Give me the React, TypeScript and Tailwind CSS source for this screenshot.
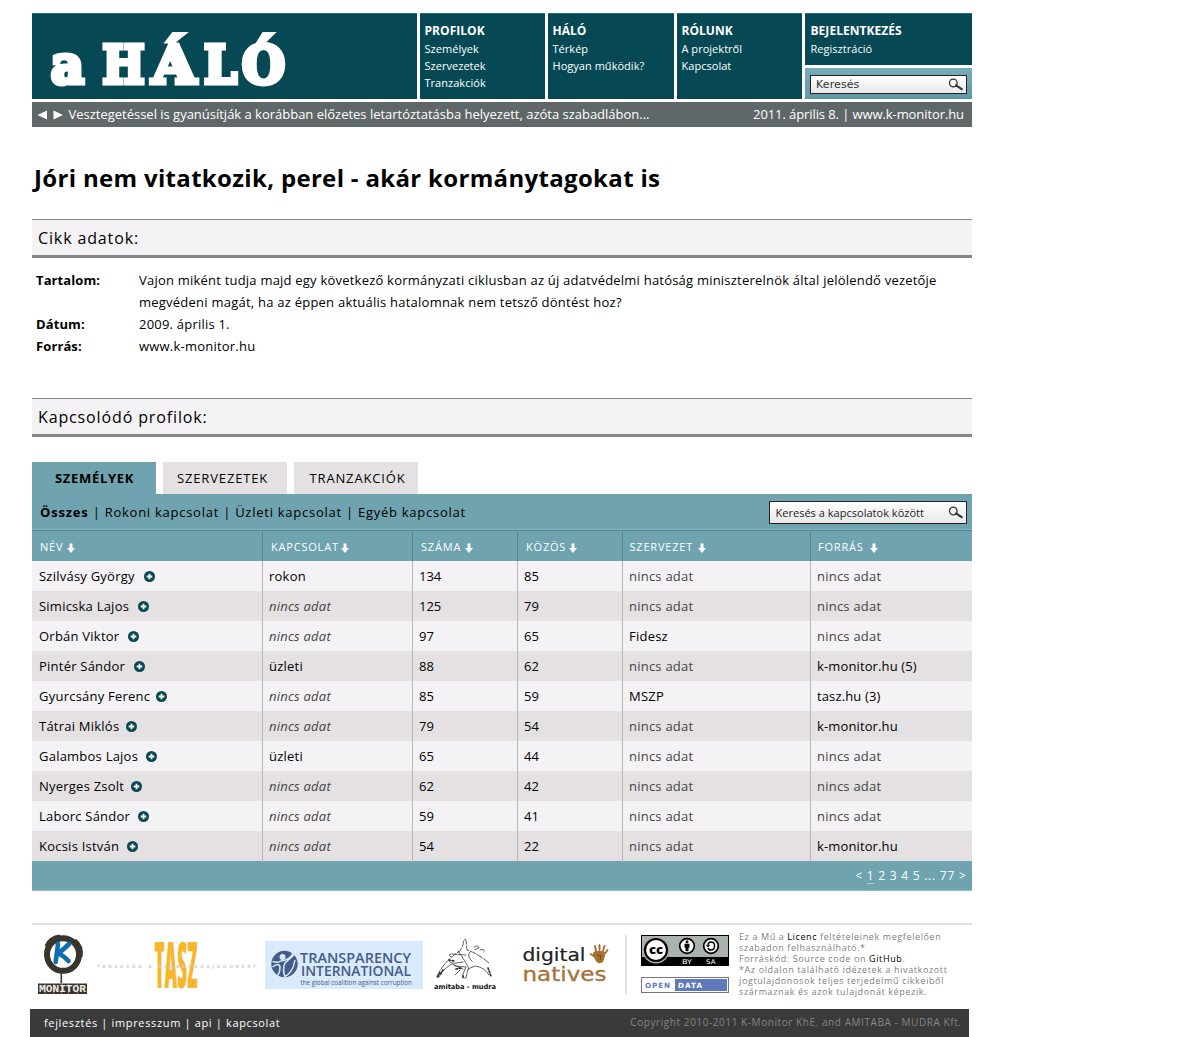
import type { ReactNode } from "react";

const menus = [
  { title: "PROFILOK", links: ["Személyek", "Szervezetek", "Tranzakciók"], cls: "w-[125px]" },
  { title: "HÁLÓ", links: ["Térkép", "Hogyan működik?"], cls: "w-[126px]" },
  { title: "RÓLUNK", links: ["A projektről", "Kapcsolat"], cls: "w-[125px]" },
];

type Row = [string, number, string, string, string, string, string];
const none = "nincs adat";
const rows: Row[] = [
  ["Szilvásy György", 105, "rokon", "134", "85", none, none],
  ["Simicska Lajos", 99, none, "125", "79", none, none],
  ["Orbán Viktor", 89, none, "97", "65", "Fidesz", none],
  ["Pintér Sándor", 95, "üzleti", "88", "62", none, "k-monitor.hu (5)"],
  ["Gyurcsány Ferenc", 117, none, "85", "59", "MSZP", "tasz.hu (3)"],
  ["Tátrai Miklós", 87, none, "79", "54", none, "k-monitor.hu"],
  ["Galambos Lajos", 107, "üzleti", "65", "44", none, none],
  ["Nyerges Zsolt", 92, none, "62", "42", none, none],
  ["Laborc Sándor", 99, none, "59", "41", none, none],
  ["Kocsis István", 88, none, "54", "22", none, "k-monitor.hu"],
];

const gridCols = "grid grid-cols-[230px_150px_105px_105px_188px_162px]";

function Magnifier() {
  return (
    <svg width="16" height="14" viewBox="0 0 16 14" className="shrink-0">
      <circle cx="5.3" cy="5" r="3.8" fill="none" stroke="#333" strokeWidth="1.3" />
      <path d="M8 7.400l5.800 3.800" stroke="#333" strokeWidth="2.1" strokeLinecap="round" />
    </svg>
  );
}

function DownArrow() {
  return (
    <svg width="8" height="10" viewBox="0 0 8 10" className="shrink-0">
      <path d="M2.500 0.500h3v4.600H8L4 9.900 0 5.100h2.500z" fill="#fff" />
    </svg>
  );
}

function Plus() {
  return (
    <svg width="11" height="11" viewBox="0 0 11 11" className="shrink-0">
      <circle cx="5.5" cy="5.5" r="5.5" fill="#064954" />
      <path d="M5.5 2.7v5.6M2.7 5.5h5.6" stroke="#fff" strokeWidth="1.8" />
    </svg>
  );
}

function MenuTitle({ children }: { children: ReactNode }) {
  return <div className="text-xs leading-[17px] font-bold tracking-[0.04px]">{children}</div>;
}

function SiteLogo() {
  const glyph = { lengthAdjust: "spacingAndGlyphs" as const };
  return (
    <svg
      width="385"
      height="85"
      viewBox="32 14 385 85"
      className="block font-bold"
      fill="#fff"
      stroke="#fff"
      strokeWidth="5"
      fontFamily="DejaVu Serif, serif"
      fontSize="53"
    >
      <text x="51" y="82.5" textLength="33" {...glyph}>a</text>
      <text x="102.500" y="82.5" textLength="42" {...glyph}>H</text>
      <text x="152" y="82.5" textLength="44" {...glyph}>Á</text>
      <text x="204" y="82.5" textLength="33" {...glyph}>L</text>
      <text x="242" y="82.5" textLength="43" {...glyph}>Ó</text>
    </svg>
  );
}

function SectionTitle({ children }: { children: ReactNode }) {
  return (
    <h2 className="h-[39px] border-t border-b-[3px] border-[#888889] bg-[#f4f2f4] pl-1.5 text-base leading-[36px] tracking-[0.87px]">
      {children}
    </h2>
  );
}

function HeadCell({ children, cls, first }: { children: ReactNode; cls: string; first?: boolean }) {
  return (
    <div className={`flex items-center pt-0.5 ${first ? "" : "border-l border-[#59828c]"} ${cls}`}>
      <span>{children}</span>
      <DownArrow />
    </div>
  );
}

function Cell({ text, italic }: { text: string; italic?: boolean }) {
  const empty = text === none;
  return (
    <div
      className={`border-l border-[#b7b5b7] pl-1.5 ${empty ? "text-[#444]" : ""} ${empty && italic ? "italic" : ""} ${/^\d/.test(text) ? "tracking-normal" : ""} ${text.includes(".hu") ? "tracking-[0.13px]" : ""}`}
    >
      {text}
    </div>
  );
}

function FooterLogos() {
  return (
    <svg width="593" height="72" viewBox="32 929 593 72" className="block shrink-0">
      <g>
        <ellipse cx="63" cy="954.5" rx="16" ry="16.3" fill="none" stroke="#3a352c" strokeWidth="6" />
        <path d="M46 946Q50 937 60 936M75 940Q83 946 81 957" fill="none" stroke="#3a352c" strokeWidth="3" />
        <path d="M61.3 972v11" stroke="#3a352c" strokeWidth="1.6" />
        <path d="M58 944L55.7 962M69 944Q63 950 58.5 953Q65 957 68.5 961" fill="none" stroke="#0e6cb0" strokeWidth="4.600" strokeLinecap="round" />
        <rect x="38" y="983.5" width="49" height="10.5" fill="#3a332c" />
        <path d="M45.3 983v11M53.6 983v11M61.5 983v11M68.5 983v11M77.5 983v11" stroke="#9c958c" strokeWidth="0.7" />
        <text x="39" y="992.3" textLength="47" lengthAdjust="spacingAndGlyphs" fontFamily="Liberation Mono, monospace" fontWeight="700" fontSize="11" fill="#efece6">MONITOR</text>
      </g>
      <g>
        <text x="154.5" y="987.5" textLength="43" lengthAdjust="spacingAndGlyphs" fontFamily="Open Sans, sans-serif" fontWeight="800" fontSize="63.5" fill="#f8b62d" style={{ fontStretch: "75%" }}>TASZ</text>
        <text x="97" y="968" textLength="159" fontFamily="DejaVu Sans, sans-serif" fontWeight="700" fontSize="4.400" fill="#cfcfcf">TÁRSASÁG A SZABADSÁGJOGOKÉRT</text>
      </g>
      <g>
        <rect x="265" y="941" width="158" height="48" fill="#d9eafa" />
        <circle cx="284.5" cy="964" r="13.200" fill="#455b88" />
        <path d="M272.500 961.500Q278 963 281 961Q290 960 293 953M272.500 967Q279 962 280 967Q280 973 277 976M285 977Q282 969 285 963L294 955M284 977Q293 973 295 960" fill="none" stroke="#d9eafa" strokeWidth="1.5" />
        <circle cx="282.5" cy="957" r="3" fill="#d9eafa" />
        <text x="300" y="963" textLength="111" lengthAdjust="spacingAndGlyphs" fontFamily="Open Sans, sans-serif" fontWeight="600" fontSize="14" fill="#455b88">TRANSPARENCY</text>
        <text x="301" y="976" textLength="110" lengthAdjust="spacingAndGlyphs" fontFamily="Open Sans, sans-serif" fontWeight="600" fontSize="14" fill="#455b88">INTERNATIONAL</text>
        <text x="300.500" y="984.5" textLength="111.500" lengthAdjust="spacingAndGlyphs" fontFamily="Open Sans, sans-serif" fontSize="7" fill="#455b88">the global coalition against corruption</text>
      </g>
      <g fill="none" stroke="#333" strokeLinecap="round">
        <path d="M437 976Q445 960 460 951L463 945Q464 937 466 940L467 950Q477 953 489 963" strokeWidth="0.8" strokeDasharray="6 1.800" />
        <path d="M439 977Q444 968 452 964L463 969M451 957Q447 954 452 954L466 955M449 960Q448 965 463 962M455 966L466 967 463 974Q463 979 466 978L468 969 475 966Q484 967 489 975M458 951Q466 962 469 969M470 952Q466 956 473 962M474 947q4-3 5 1l-5 2M480 950q5-2 4 2M455 975l5-5" strokeWidth="0.8" strokeDasharray="5 1" />
        <path d="M437.500 977l3-5M440.500 974l3-5M488 968l3 8M449 960l6 1M456 969l5-1M463 976v3" strokeWidth="1.700" strokeDasharray="1.500 1.800" />
        <text x="434" y="988.5" textLength="62" lengthAdjust="spacingAndGlyphs" stroke="none" fill="#111" fontFamily="DejaVu Sans, sans-serif" fontWeight="700" fontSize="6.8">amitaba - mudra</text>
      </g>
      <g fontFamily="DejaVu Sans, sans-serif">
        <text x="522.5" y="961" textLength="63" lengthAdjust="spacingAndGlyphs" fontSize="18" fill="#222" stroke="#222" strokeWidth="0.2">digital</text>
        <text x="522.500" y="981" textLength="84" lengthAdjust="spacingAndGlyphs" fontSize="19" fill="#a8713a" stroke="#a8713a" strokeWidth="0.3">natives</text>
        <path d="M594 957q-3-5 2-6l6 0q4 0 3 5l-2 6q-5 3-7-1z" fill="#a9712f" />
        <path d="M595 957L590.500 954M596 951l-1-5M599.500 950v-5M603 951l1.500-5M605.500 953l2-3" stroke="#a9712f" strokeWidth="1.9" strokeLinecap="round" />
        <path d="M597 955l4 1-1 4" stroke="#6d4317" fill="none" />
      </g>
    </svg>
  );
}

function Badges() {
  return (
    <svg width="88" height="60" viewBox="641 935 88 60" className="block shrink-0">
      <rect x="641.5" y="935.5" width="87" height="30" fill="#aab2ab" stroke="#000" />
      <rect x="641" y="957" width="88" height="9" fill="#000" />
      <circle cx="656" cy="950" r="13.5" fill="#aab2ab" />
      <circle cx="656" cy="950" r="11" fill="#fff" stroke="#000" strokeWidth="2.2" />
      <text x="649" y="954" textLength="14" lengthAdjust="spacingAndGlyphs" fontFamily="Open Sans, sans-serif" fontWeight="800" fontSize="13">cc</text>
      <circle cx="687" cy="946" r="7.300" fill="#fff" stroke="#000" strokeWidth="1.7" />
      <circle cx="687" cy="941.8" r="1.5" />
      <path d="M684.500 943.800h5v4h-1v3.500h-3v-3.500h-1z" />
      <circle cx="711" cy="946" r="7.300" fill="#fff" stroke="#000" strokeWidth="1.7" />
      <path d="M708 944.500Q708.500 942 711 942q3.600 0 3.600 4t-3.600 4q-2.500 0-3-2" fill="none" stroke="#000" strokeWidth="1.5" />
      <path d="M705.800 944.800h4.400l-2.200 2.600z" />
      <g fontFamily="DejaVu Sans, sans-serif" fontSize="6.5">
        <text x="682" y="964" textLength="10" lengthAdjust="spacingAndGlyphs" fill="#fff">BY</text>
        <text x="706" y="964" textLength="9.500" lengthAdjust="spacingAndGlyphs" fill="#fff">SA</text>
        <rect x="641.5" y="977.5" width="87" height="15" fill="#fff" stroke="#777" />
        <rect x="675" y="979" width="52" height="12" fill="#6079bd" />
        <g fontSize="7.2" fontWeight="700">
          <text x="645" y="988" textLength="25" fill="#6079bd">OPEN</text>
          <text x="678" y="988" textLength="24" fill="#fff">DATA</text>
        </g>
      </g>
    </svg>
  );
}

export default function App() {
  return (
    <div className="h-[1037px] w-[1200px] overflow-hidden bg-white pt-[13px] pl-[30px] font-['Open_Sans',sans-serif] text-[13px] text-black">
      <div className="ml-0.5 w-[940px]">
        <header className="flex h-[86px] gap-[3px] text-white">
          <div className="w-[385px] border-t border-[#16737d] bg-[#064954]">
            <SiteLogo />
          </div>
          {menus.map((m) => (
            <nav key={m.title} className={`border-t border-[#16737d] bg-[#064954] pt-2 pl-[4.500px] ${m.cls}`}>
              <MenuTitle>{m.title}</MenuTitle>
              {m.links.map((l) => (
                <div key={l} className="h-[17px] text-[11px] leading-[19px] tracking-[0.03px]">{l}</div>
              ))}
            </nav>
          ))}
          <div className="flex flex-1 flex-col gap-[3px]">
            <div className="h-[52px] border-t border-[#16737d] bg-[#064954] pt-2 pl-[5.500px]">
              <MenuTitle>BEJELENTKEZÉS</MenuTitle>
              <div className="text-[11px] leading-[19px] tracking-[0.03px]">Regisztráció</div>
            </div>
            <div className="h-[31px] bg-linear-to-b from-[#79acb8] to-[#5f98a5] px-[5px] pt-[7px]">
              <div className="flex h-[19px] items-center justify-between border border-[#222] bg-linear-to-b from-white to-[#e8e8e8] pr-0.5 pl-[5px] font-['DejaVu_Sans',sans-serif] text-[11px] tracking-[0.1px] text-[#333]">
                <span className="pt-0.5">Keresés</span>
                <Magnifier />
              </div>
            </div>
          </div>
        </header>

        <div className="mt-[3px] flex h-[25px] items-center justify-between bg-[#5f6769] pr-[8px] pl-[5px] leading-[25px] text-white">
          <div className="flex items-center">
            <svg width="26" height="10" viewBox="0 0 26 10" fill="#fff">
              <path d="M.5 5l9.500-4.500v9zM26 5l-9.500-4.500v9z" />
            </svg>
            <span className="ml-[5.500px] tracking-[-0.01px] whitespace-nowrap">
              Vesztegetéssel is gyanúsítják a korábban előzetes letartóztatásba helyezett, azóta szabadlábon...
            </span>
          </div>
          <span className="tracking-[-0.09px]">2011. április 8. | www.k-monitor.hu</span>
        </div>

        <h1 className="mt-[33px] pl-0.5 text-2xl leading-[36px] font-bold tracking-[0.325px] whitespace-nowrap">
          Jóri nem vitatkozik, perel - akár kormánytagokat is
        </h1>

        <div className="mt-[23px]">
          <SectionTitle>Cikk adatok:</SectionTitle>
        </div>
        <dl className="mt-[11px] grid grid-cols-[103px_1fr] pl-1 leading-[22px] tracking-[0.215px]">
          <dt className="font-bold tracking-[0.1px]">Tartalom:</dt>
          <dd className="whitespace-nowrap">
            Vajon miként tudja majd egy következő kormányzati ciklusban az új adatvédelmi hatóság miniszterelnök által jelölendő vezetője
            <br />
            <span className="tracking-[0.235px]">megvédeni magát, ha az éppen aktuális hatalomnak nem tetsző döntést hoz?</span>
          </dd>
          <dt className="font-bold tracking-[0.1px]">Dátum:</dt>
          <dd>2009. április 1.</dd>
          <dt className="font-bold tracking-[0.1px]">Forrás:</dt>
          <dd>www.k-monitor.hu</dd>
        </dl>

        <div className="mt-[41px]">
          <SectionTitle>Kapcsolódó profilok:</SectionTitle>
        </div>

        <div className="mt-[25px] flex h-8 gap-[7px] leading-[33px] tracking-[0.85px]">
          <div className="w-[124px] bg-[#6ea3af] pl-[23px] font-bold tracking-[0.7px]">SZEMÉLYEK</div>
          <div className="w-[124px] bg-[#e5e1e3] pl-3.5">SZERVEZETEK</div>
          <div className="w-[124px] bg-[#e5e1e3] pl-[15.500px]">TRANZAKCIÓK</div>
        </div>
        <div className="flex h-[37px] justify-between border-b border-[#4f8492] bg-[#6ea3af] pr-[5px] pl-2 shadow-[inset_0_-1px_0_#87b7c1]">
          <div className="leading-[37px] tracking-[0.74px] whitespace-nowrap">
            <b className="tracking-[0.8px]">Összes</b> | Rokoni kapcsolat | Üzleti kapcsolat | Egyéb kapcsolat
          </div>
          <div className="mt-[7px] flex h-[23px] w-[198px] items-center justify-between border border-[#222] bg-linear-to-b from-white to-[#e8e8e8] pr-0.5 pl-[5.500px] text-[11px] tracking-[0.02px] text-[#222]">
            <span className="pt-px">Keresés a kapcsolatok között</span>
            <Magnifier />
          </div>
        </div>

        <div className={`${gridCols} h-[30px] bg-[#6ea3af] pt-px text-[11px] tracking-[0.8px] text-white`}>
          <HeadCell first cls="gap-[3.500px] pl-2">NÉV</HeadCell>
          <HeadCell cls="gap-[2.500px] pl-2">KAPCSOLAT</HeadCell>
          <HeadCell cls="gap-[3.500px] pl-2">SZÁMA</HeadCell>
          <HeadCell cls="gap-[2.500px] pl-2">KÖZÖS</HeadCell>
          <HeadCell cls="gap-[5px] pl-[6.500px]">SZERVEZET</HeadCell>
          <HeadCell cls="gap-[6px] pl-[7px]">FORRÁS</HeadCell>
        </div>

        <div className="leading-[31px] tracking-[0.23px]">
          {rows.map(([name, iconX, link, count, shared, org, source]) => (
            <div key={name} className={`${gridCols} h-[30px] odd:bg-[#f4f2f4] even:bg-[#e5e1e3]`}>
              <div className="flex items-center pl-[7px] whitespace-nowrap">
                <span style={{ width: iconX }}>{name}</span>
                <Plus />
              </div>
              <Cell text={link} italic />
              <Cell text={count} />
              <Cell text={shared} />
              <Cell text={org} />
              <Cell text={source} />
            </div>
          ))}
        </div>

        <div className="h-[30px] border-b border-[#93bcc5] bg-[#6ea3af] pr-[5.500px] text-right text-xs leading-[29px] tracking-[0.75px] text-white">
          &lt; <span className="underline decoration-[#a9cbd2] decoration-1 underline-offset-[3px]">1</span> 2 3 4 5 ... 77 &gt;
        </div>

        <div className="mt-8 h-0.5 bg-[#e2e0e2]" />
        <div className="flex h-[84px] pt-1">
          <FooterLogos />
          <div className="mt-1.5 h-[59px] w-0.5 bg-[#e2e0e2]" />
          <div className="mt-1.5 ml-3.5">
            <Badges />
          </div>
          <p className="mt-0.5 ml-2.5 text-[9px] leading-[11px] tracking-[0.61px] whitespace-nowrap text-[#808080]">
            Ez a Mű a <span className="text-black">Licenc</span> feltételeinek megfelelően
            <br />
            szabadon felhasználható.*
            <br />
            Forráskód: Source code on <span className="text-black">GitHub</span>.
            <br />
            *Az oldalon található idézetek a hivatkozott
            <br />
            jogtulajdonosok teljes terjedelmű cikkeiből
            <br />
            származnak és azok tulajdonát képezik.
          </p>
        </div>
      </div>

      <footer className="flex h-7 w-[939px] justify-between bg-[#3a3a3a] pr-[7.500px] pl-3.5 text-[11px] leading-[28px] text-white">
        <span className="tracking-[0.65px]">fejlesztés | impresszum | api | kapcsolat</span>
        <span className="-mt-px text-[10px] tracking-[0.57px] text-[#858585]">
          Copyright 2010-2011 K-Monitor KhE. and AMITABA - MUDRA Kft.
        </span>
      </footer>
    </div>
  );
}
